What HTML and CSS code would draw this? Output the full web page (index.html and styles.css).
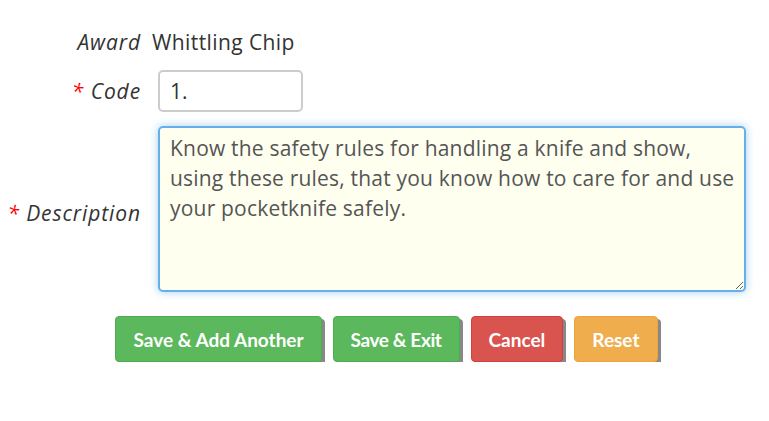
FILE: index.html
```html
<!DOCTYPE html>
<html lang="en">
<head>
  <meta charset="UTF-8" />
  <title>Edit Requirement</title>
  <link rel="stylesheet" href="styles.css">
</head>
<body>
  <form id="requirementForm" class="req-form">
    <div class="row">
      <span class="label">Award</span>
      <span class="value">Whittling Chip</span>
    </div>
    <div class="row">
      <label class="label" for="code"><span class="req">*</span> Code</label>
      <input type="text" id="code" name="code" class="code-input" value="1." />
    </div>
    <div class="row">
      <label class="label label-low" for="description"><span class="req">*</span> Description</label>
      <textarea id="description" name="description" class="desc-input">Know the safety rules for handling a knife and show, using these rules, that you know how to care for and use your pocketknife safely.</textarea>
    </div>

    <!-- Buttons -->
    <div class="actions">
      <button type="submit" class="btn btn-green">Save &amp; Add Another</button>
      <button type="submit" class="btn btn-green btn-tight">Save &amp; Exit</button>
      <button type="button" class="btn btn-red">Cancel</button>
      <button type="reset" class="btn btn-orange">Reset</button>
    </div>
  </form>
</body>
</html>
```

FILE: styles.css
```css
body {
  font-family: "Open Sans", sans-serif;
  font-size: 21px;
  color: #333;
  margin: 0;
}
.req-form {
  padding-top: 27px;
}
.row {
  display: grid;
  grid-template-columns: 140px 588px;
  column-gap: 18px;
  align-items: center;
  margin-bottom: 14px;
}
.row:first-child {
  margin-bottom: 13px;
}
.label {
  font-style: italic;
  text-align: right;
  line-height: 30px;
  letter-spacing: 0.9px;
  margin-right: -1px;
}
.label-low {
  padding-top: 7px;
}
.req {
  color: red;
}
.value {
  line-height: 30px;
  letter-spacing: 0.4px;
  margin-left: -6px;
}
.code-input {
  width: 145px;
  height: 42px;
  box-sizing: border-box;
  border: 2px solid #ccc;
  border-radius: 5px;
  padding: 0 10px;
  font: inherit;
  color: #333;
}
.desc-input {
  height: 166px;
  box-sizing: border-box;
  border: 2px solid #66afe9;
  border-radius: 5px;
  padding: 5px 4px 5px 10px;
  font: inherit;
  line-height: 30px;
  letter-spacing: 0.2px;
  color: #555;
  background-color: #fffff0;
  box-shadow: 0 0 8px rgba(102, 175, 233, 0.6);
  outline: none;
  resize: both;
}
/* Buttons */
.actions {
  display: flex;
  justify-content: center;
  gap: 11px;
  margin-top: 24px;
  padding-left: 4px;
}
.btn {
  font-family: Lato, sans-serif;
  font-size: 19px;
  font-weight: bold;
  color: #fff;
  height: 46px;
  padding: 0 17px;
  border-radius: 4px;
  border: 1px solid;
  box-shadow: 3px 3px 0 #888;
  cursor: pointer;
}
.btn-tight {
  letter-spacing: -0.4px;
}
.btn-green {
  background-color: #5cb85c;
  border-color: #4cae4c;
}
.btn-red {
  background-color: #d9534f;
  border-color: #d43f3a;
}
.btn-orange {
  background-color: #f0ad4e;
  border-color: #eea236;
}
```
